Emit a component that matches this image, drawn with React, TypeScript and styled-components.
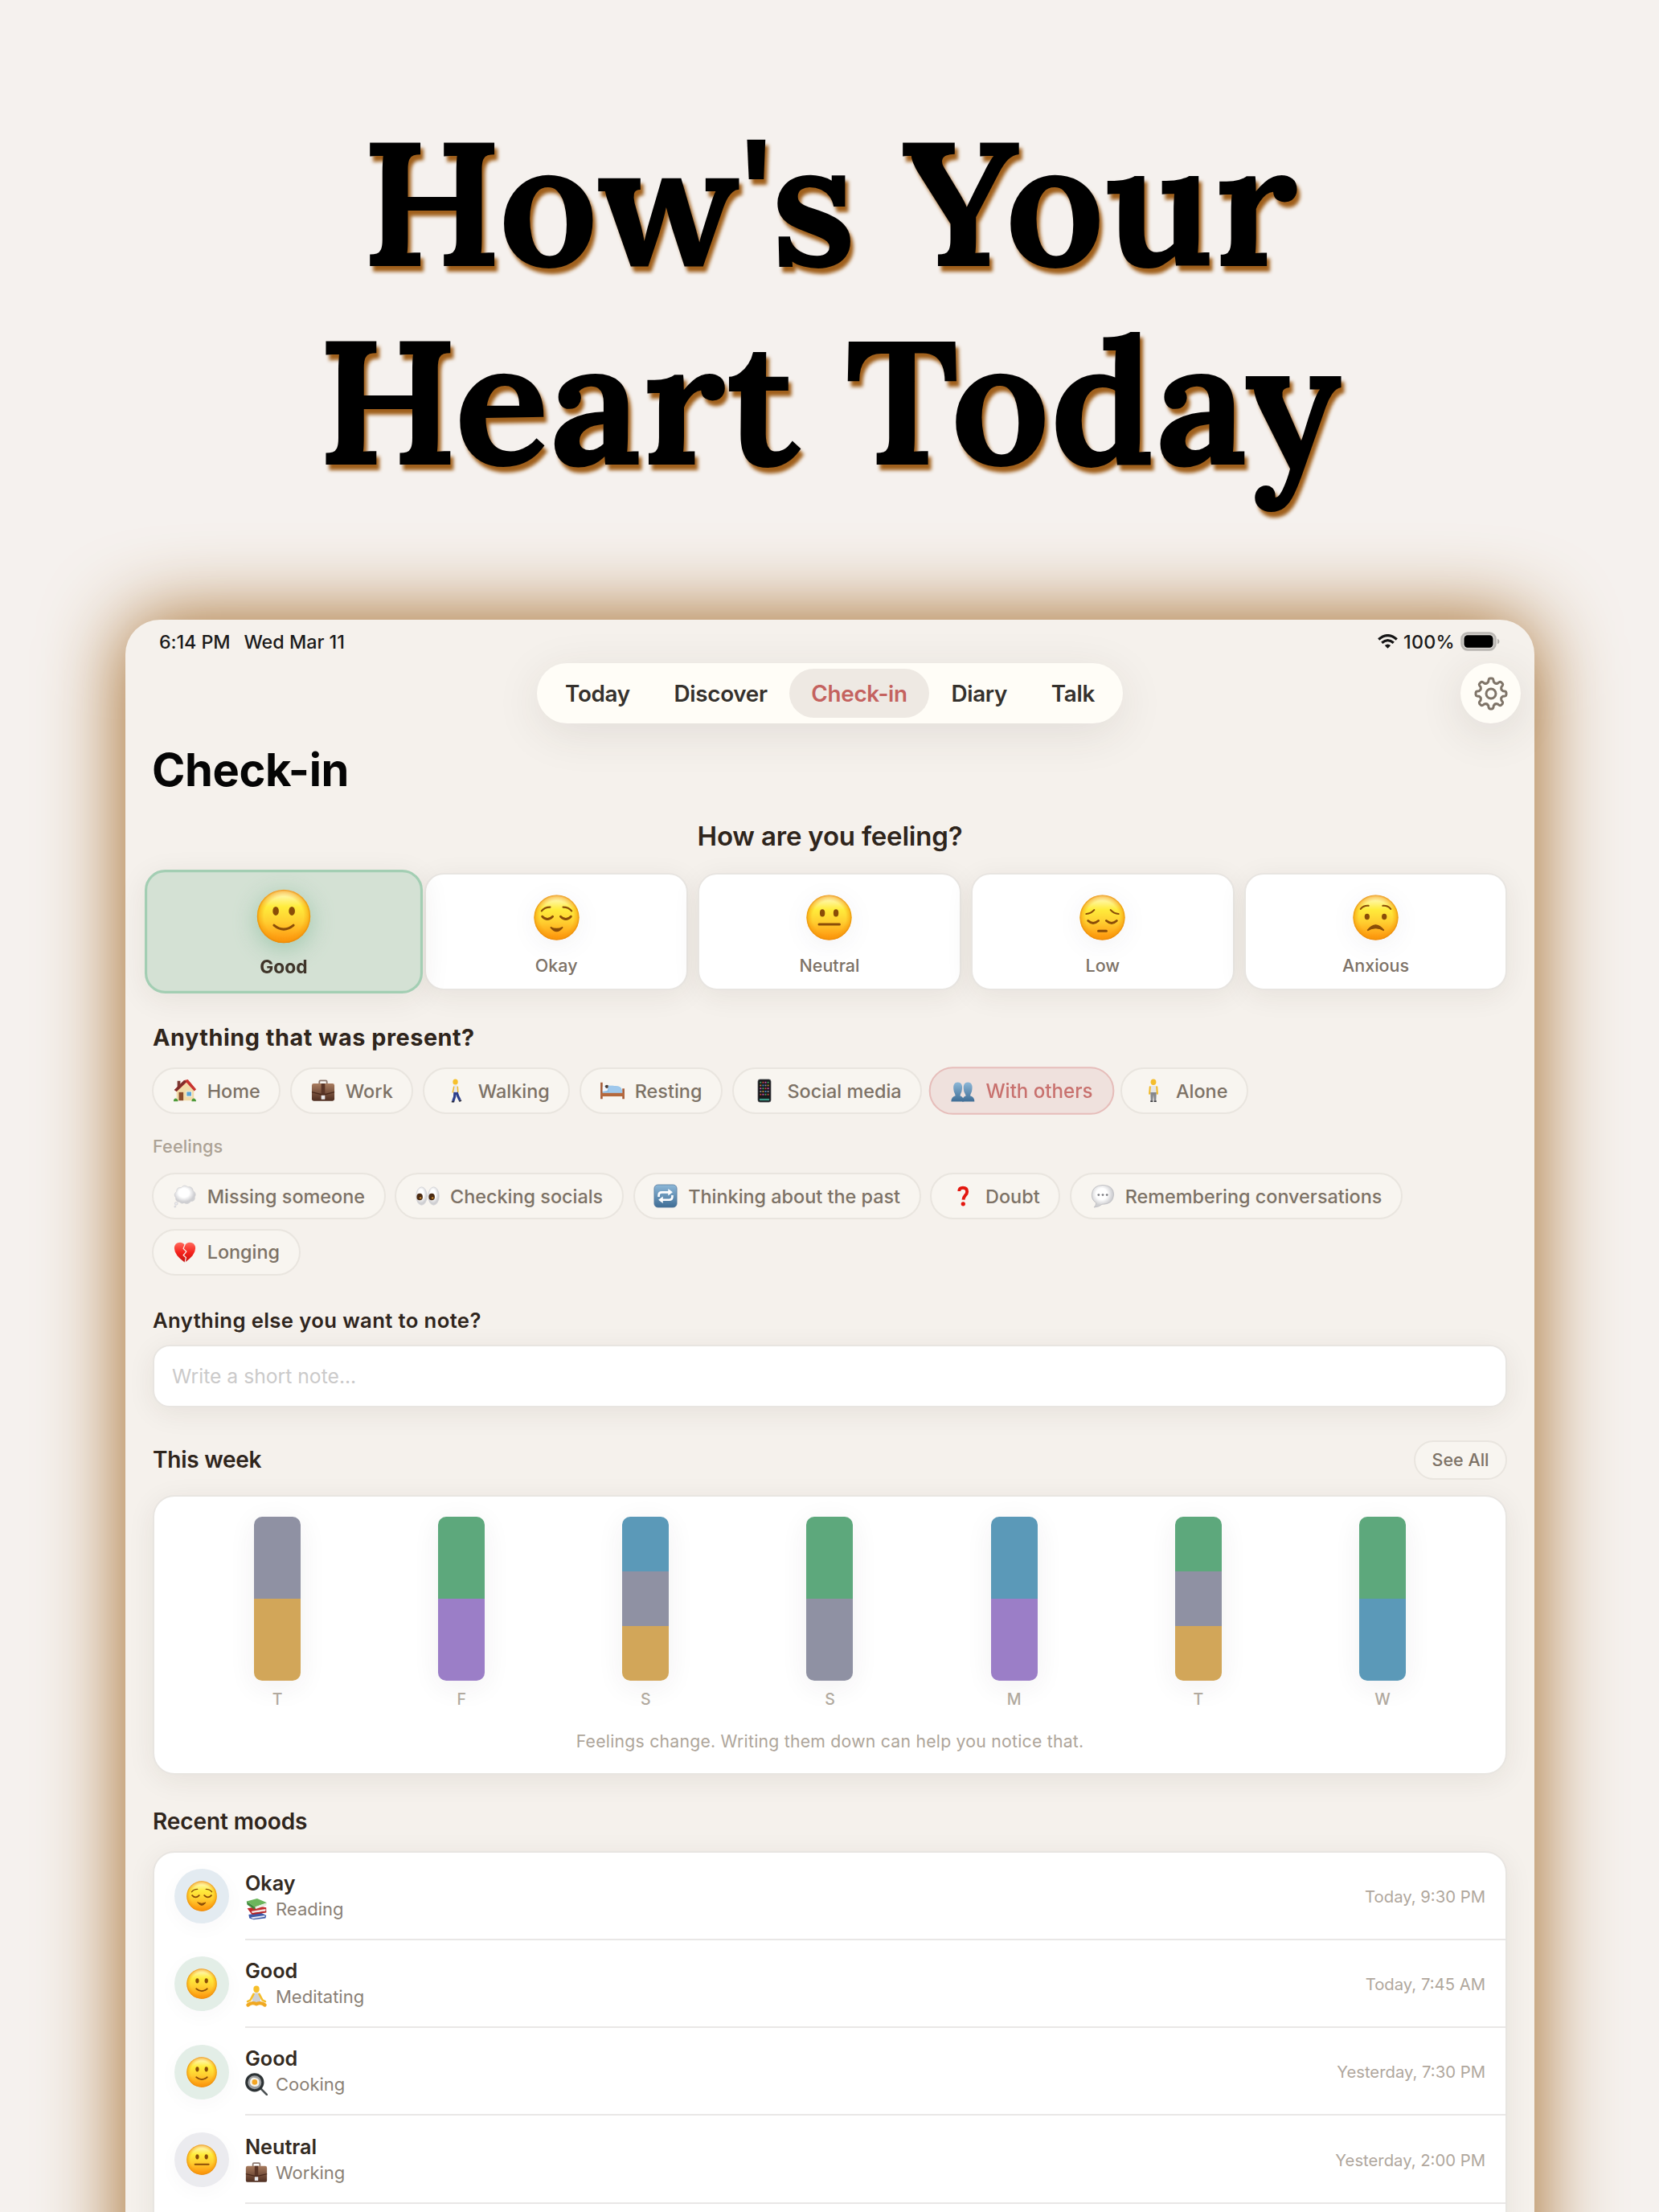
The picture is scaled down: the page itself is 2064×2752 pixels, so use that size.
import React from 'react';
import styled, { createGlobalStyle, css } from 'styled-components';

const GlobalStyle = createGlobalStyle`
  * {
    box-sizing: border-box;
  }

  body {
    margin: 0;
    background: #f5f1ee;
    font-family: 'Inter', 'Liberation Sans', sans-serif;
    -webkit-font-smoothing: antialiased;
  }
`;

const Page = styled.main`
  width: 2064px;
  height: 2752px;
  overflow: hidden;
  display: flex;
  flex-direction: column;
  align-items: center;
  background: #f5f1ee;
`;

const Headline = styled.h1`
  margin: 0;
  padding-top: 128px;
  height: 771px;
  flex: none;
  text-align: center;
  font-family: 'Lora', 'Liberation Serif', serif;
  font-weight: 700;
  font-size: 219px;
  line-height: 247px;
  color: #000;
  text-shadow: 4px 7px 4px #a0601c;
`;

const Tablet = styled.section`
  width: 1753px;
  height: 2100px;
  margin-left: 1px;
  flex: none;
  border-radius: 43px 43px 0 0;
  background: #f5f1ec;
  box-shadow: 0 0 100px #a0641f;
`;

/* status bar */

const StatusBar = styled.div`
  height: 54.3px;
  padding: 0 43px 0 42px;
  display: flex;
  align-items: center;
  font-size: 23.3px;
  font-weight: 550;
  color: #1a1a1a;
`;

const StatusText = styled.span<{ $gap?: number; $spacing?: number }>`
  margin-right: ${props => props.$gap ?? 0}px;
  letter-spacing: ${props => props.$spacing ?? 0}px;
  white-space: nowrap;
`;

const StatusRight = styled.div`
  margin-left: auto;
  display: flex;
  align-items: center;
  gap: 7px;
`;

/* navigation */

const NavRow = styled.div`
  display: grid;
  grid-template-columns: 1fr auto 1fr;
  align-items: center;
  padding: 0 17px;
  height: 75px;
`;

const NavPill = styled.nav`
  grid-column: 2;
  height: 75px;
  padding: 0 8px;
  display: flex;
  align-items: center;
  border-radius: 38px;
  background: #fffdf7;
  box-shadow: 0 12px 56px rgba(60, 50, 40, 0.1);
`;

const NavTab = styled.a<{ $active?: boolean }>`
  height: 61px;
  padding: 0 27.3px;
  display: flex;
  align-items: center;
  border-radius: 31px;
  font-size: 27.8px;
  font-weight: 570;
  letter-spacing: -0.28px;
  color: ${props => (props.$active ? '#c4625f' : '#35312d')};
  background: ${props => (props.$active ? '#eee9e3' : 'transparent')};
`;

const GearButton = styled.button`
  justify-self: end;
  width: 75px;
  height: 75px;
  padding: 0;
  border: 0;
  border-radius: 50%;
  display: grid;
  place-items: center;
  background: #fffdf7;
  box-shadow: 0 12px 56px rgba(60, 50, 40, 0.12);
`;

/* content */

const Content = styled.div`
  padding: 0 34px;
`;

const Title = styled.h2`
  margin: 28px 0 0 -1px;
  font-size: 56px;
  line-height: 60px;
  font-weight: 700;
  letter-spacing: -0.4px;
  color: #050505;
`;

const Question = styled.h3`
  margin: 32px 0 0;
  text-align: center;
  font-size: 33px;
  line-height: 40px;
  font-weight: 620;
  letter-spacing: -0.2px;
  color: #2f251c;
`;

const SectionTitle = styled.h3<{ $top: number; $size?: number; $spacing?: number; $weight?: number }>`
  margin: ${props => props.$top}px 0 0;
  font-size: ${props => props.$size ?? 28}px;
  line-height: 34px;
  font-weight: ${props => props.$weight ?? 600};
  letter-spacing: ${props => props.$spacing ?? -0.1}px;
  color: #2f251c;
`;

const SubLabel = styled.div`
  margin: 25.5px 0 19.5px;
  font-size: 21.7px;
  line-height: 28px;
  font-weight: 500;
  letter-spacing: 0.1px;
  color: #aca295;
`;

const surface = css`
  background: #fff;
  border: 2px solid #e8e5e1;
  box-shadow: 0 7px 34px rgba(60, 45, 30, 0.075);
`;

const MoodGrid = styled.div`
  margin: 26px -0.5px 0 -1.5px;
  display: grid;
  grid-template-columns: repeat(5, 1fr);
  gap: 12px;
`;

const MoodCard = styled.button<{ $selected?: boolean }>`
  ${surface}
  height: 146px;
  padding: 25px 0 0;
  display: flex;
  flex-direction: column;
  align-items: center;
  gap: 17px;
  border-radius: 24px;
  font-family: inherit;
  font-size: 21.5px;
  line-height: 28px;
  font-weight: 500;
  color: #7d7267;

  svg {
    filter: drop-shadow(0 6px 14px rgba(40, 40, 60, 0.06));
  }

  ${props =>
    props.$selected &&
    css`
      transform: scale(1.055);
      padding-top: 20px;
      gap: 13px;
      background: #d4e1d4;
      border: 3px solid #a3ceb3;
      font-weight: 700;
      color: #3f3429;

      svg {
        filter: drop-shadow(0 6px 14px rgba(93, 168, 124, 0.45));
      }
    `}
`;

const ChipRow = styled.div<{ $top?: number }>`
  margin: ${props => props.$top ?? 0}px -1px 0;
  display: flex;
  flex-wrap: wrap;
  gap: 11.7px;
`;

const Chip = styled.button<{ $selected?: boolean }>`
  height: 58px;
  padding: 0 23.7px;
  display: flex;
  align-items: center;
  gap: 13px;
  border: 2px solid #e9e5df;
  border-radius: 29px;
  background: #f8f5f0;
  font-family: inherit;
  font-size: 23.4px;
  font-weight: 500;
  white-space: nowrap;
  color: #7d7266;

  ${props =>
    props.$selected &&
    css`
      transform: scale(1.03);
      border: 2px solid #e6bdba;
      background: #efe1dd;
      color: #c8716e;
    `}
`;

const NoteInput = styled.input`
  ${surface}
  display: block;
  width: 100%;
  height: 78px;
  margin-top: 13.5px;
  padding: 0 22px;
  border-radius: 21px;
  font-family: inherit;
  font-size: 24.7px;
  outline: none;

  &::placeholder {
    color: #cbcaca;
    opacity: 1;
  }
`;

const WeekHeader = styled.div`
  height: 49px;
  margin-top: 40.5px;
  display: flex;
  align-items: center;
  justify-content: space-between;
`;

const SeeAll = styled.button`
  height: 49px;
  width: 116px;
  padding: 0;
  border: 2px solid #e9e5df;
  border-radius: 25px;
  background: #f8f5f0;
  font-family: inherit;
  font-size: 21.5px;
  font-weight: 550;
  color: #7d7266;
`;

const WeekCard = styled.div`
  ${surface}
  height: 348px;
  margin-top: 19px;
  padding: 25.5px 38.5px 0;
  border-radius: 27px;
`;

const Bars = styled.div`
  display: grid;
  grid-template-columns: repeat(7, 1fr);
  justify-items: center;
`;

const Day = styled.div`
  display: flex;
  flex-direction: column;
  align-items: center;
  gap: 8.5px;
  font-size: 19.5px;
  line-height: 28px;
  font-weight: 500;
  color: #b1a99e;
`;

const Bar = styled.div`
  width: 58px;
  height: 204px;
  display: flex;
  flex-direction: column;
  overflow: hidden;
  border-radius: 10px;
`;

const BarShadow = styled.div`
  border-radius: 10px;
  box-shadow: 0 7px 34px rgba(60, 45, 50, 0.07);
`;

const Segment = styled.div<{ $color: string }>`
  flex: 1;
  background: ${props => props.$color};
`;

const Footnote = styled.p`
  margin: 23.5px 0 0;
  text-align: center;
  font-size: 21.2px;
  line-height: 30px;
  letter-spacing: 0.25px;
  color: #aea59a;
`;

const MoodList = styled.div`
  ${surface}
  margin-top: 20px;
  height: 560px;
  border-radius: 27px;
`;

const MoodRow = styled.div`
  height: 109.4px;
  padding-left: 24.5px;
  display: flex;
  align-items: center;
  gap: 20.5px;

  &:first-child {
    height: 109px;
  }
`;

const Avatar = styled.div<{ $tint: string }>`
  width: 68px;
  height: 68px;
  flex: none;
  display: grid;
  place-items: center;
  border-radius: 50%;
  background: ${props => props.$tint};
  box-shadow: 0 6px 24px rgba(60, 45, 50, 0.03);
`;

const MoodBody = styled.div`
  flex: 1;
  align-self: stretch;
  display: flex;
  align-items: center;
  justify-content: space-between;
  padding: 2px 25px 0 0;
  border-bottom: 2px solid #e9e7e6;
`;

const MoodName = styled.div`
  font-size: 25.2px;
  line-height: 31px;
  font-weight: 600;
  color: #332a21;
`;

const MoodTag = styled.div`
  display: flex;
  align-items: center;
  gap: 10px;
  font-size: 22px;
  line-height: 32px;
  color: #8a7f75;
`;

const MoodTime = styled.time`
  font-size: 20.3px;
  color: #b0a79d;
`;

/* icons */

type FaceKind = 'good' | 'okay' | 'neutral' | 'low' | 'anxious';

const featureStroke = {
  fill: 'none',
  stroke: '#8a4d08',
  strokeWidth: 2.8,
  strokeLinecap: 'round' as const,
};

const faceFeatures: Record<FaceKind, React.ReactNode> = {
  good: (
    <>
      <ellipse cx="22.6" cy="25.8" rx="3.6" ry="5.2" fill="#8a4d08" />
      <ellipse cx="41.6" cy="25.8" rx="3.6" ry="5.2" fill="#8a4d08" />
      <path d="M20.5 42.5Q32 52 43.5 42.5" {...featureStroke} />
    </>
  ),
  okay: (
    <>
      <path d="M11 23Q15 17.5 23 17.5M53 23Q49 17.5 41 17.5" {...featureStroke} strokeWidth={2.4} />
      <path d="M12 30.5Q19 38 26.5 30.5M37.5 30.5Q45 38 52 30.5" {...featureStroke} strokeWidth={3.2} />
      <path d="M23.5 45.5Q32 50 40.5 45.5Q32 57 23.5 45.5Z" {...featureStroke} fill="#8a4d08" strokeWidth={1.6} />
    </>
  ),
  neutral: (
    <>
      <ellipse cx="22.6" cy="25.8" rx="3.6" ry="5.2" fill="#8a4d08" />
      <ellipse cx="41.6" cy="25.8" rx="3.6" ry="5.2" fill="#8a4d08" />
      <path d="M18 41.5H46.5" {...featureStroke} strokeWidth={3.4} />
    </>
  ),
  low: (
    <>
      <path d="M9.5 27Q16 26.5 20.5 21.5M54.5 27Q48 26.5 43.5 21.5" {...featureStroke} strokeWidth={2.4} />
      <path d="M12 36.5Q19 43 26.5 36.5M37.5 36.5Q45 43 52 36.5" {...featureStroke} strokeWidth={3.2} />
      <path d="M26.5 50.8H37.5" {...featureStroke} strokeWidth={3.4} />
    </>
  ),
  anxious: (
    <>
      <path d="M11 20Q15 15 22 15.5M53 20Q49 15 42 15.5" {...featureStroke} strokeWidth={2.4} />
      <ellipse cx="20" cy="31" rx="3.5" ry="4.2" fill="#8a4d08" />
      <ellipse cx="44" cy="31" rx="3.5" ry="4.2" fill="#8a4d08" />
      <path d="M20.5 50Q32 35 43.5 50Q32 43.5 20.5 50Z" {...featureStroke} fill="#8a4d08" strokeWidth={1.6} />
    </>
  ),
};

function Face({ kind, size }: { kind: FaceKind; size: number }) {
  return (
    <svg width={size} height={size} viewBox="0 0 64 64">
      <circle cx="32" cy="32" r="31.5" fill="url(#faceFill)" />
      <circle cx="32" cy="32" r="31.5" fill="url(#faceEdge)" />
      {faceFeatures[kind]}
    </svg>
  );
}

function FaceGradients() {
  return (
    <svg width="0" height="0" style={{ position: 'absolute' }} aria-hidden>
      <defs>
        <linearGradient id="faceFill" x1="0" y1="0" x2="0" y2="1">
          <stop offset="0" stopColor="#fffad0" />
          <stop offset="0.12" stopColor="#fff6a0" />
          <stop offset="0.32" stopColor="#ffec3c" />
          <stop offset="0.6" stopColor="#ffce30" />
          <stop offset="1" stopColor="#ff8f0a" />
        </linearGradient>
        <radialGradient id="faceEdge">
          <stop offset="0.74" stopColor="#f59a0a" stopOpacity="0" />
          <stop offset="0.92" stopColor="#f59a0a" stopOpacity="0.5" />
          <stop offset="1" stopColor="#e58505" stopOpacity="0.9" />
        </radialGradient>
        <linearGradient id="leather" x1="0" y1="0" x2="0" y2="1">
          <stop offset="0" stopColor="#a87b5e" />
          <stop offset="1" stopColor="#4e2d20" />
        </linearGradient>
        <linearGradient id="steel" x1="0" y1="0" x2="0" y2="1">
          <stop offset="0" stopColor="#8db8d8" />
          <stop offset="1" stopColor="#3f6d95" />
        </linearGradient>
        <radialGradient id="cloud" cx="0.45" cy="0.4">
          <stop offset="0.5" stopColor="#ffffff" />
          <stop offset="1" stopColor="#cfcfd2" />
        </radialGradient>
        <linearGradient id="heart" x1="0" y1="0" x2="0" y2="1">
          <stop offset="0" stopColor="#ff6a5c" />
          <stop offset="0.5" stopColor="#f5231d" />
          <stop offset="1" stopColor="#c3120f" />
        </linearGradient>
      </defs>
    </svg>
  );
}

const glyphs: Record<string, React.ReactNode> = {
  house: (
    <>
      <path d="M5 14L17 4L28 15V29H5Z" fill="#f1dba9" />
      <path d="M6 3H10V9L6 13Z" fill="#7c3a33" />
      <path d="M2 15L15 2L20 1L31 14L28.500 16.500L18 5L5 17Z" fill="#c8342f" />
      <path d="M2 15L15 2L18 4L5 17Z" fill="#7e2d2b" />
      <rect x="8" y="18" width="6" height="11" fill="#8a4b2b" />
      <rect x="18" y="17" width="7" height="6.500" fill="#58a5d9" stroke="#fff5dd" strokeWidth="1" />
      <path d="M1 30Q1 26 4 26Q7 27 7 30ZM25 30Q25 26 28 26Q31 27 31 30Z" fill="#4d9a3a" />
    </>
  ),
  briefcase: (
    <>
      <path d="M11 7V4Q11 2.500 12.500 2.500H19.500Q21 2.500 21 4V7" fill="none" stroke="#8e7a70" strokeWidth="2" />
      <rect x="1" y="6.500" width="30" height="23" rx="2.500" fill="url(#leather)" />
      <path d="M13.500 6.500H18.500V20L16 23L13.500 20Z" fill="#5a3526" />
      <path d="M1 17L13 20H19L31 17V18.500L19 21.500H13L1 18.500Z" fill="#4a291c" />
      <rect x="13.500" y="22" width="5" height="5.500" rx="0.500" fill="#e9e9ec" />
    </>
  ),
  walking: (
    <>
      <ellipse cx="15.500" cy="4.300" rx="3.400" ry="3.800" fill="#f6c02c" />
      <path d="M13 9Q16.500 7.500 18.500 10L19 19H13L12.500 12Z" fill="#e6e6ec" />
      <path d="M13.500 11L12 18M18.500 11L19 18" fill="none" stroke="#f1b928" strokeWidth="1.600" strokeLinecap="round" />
      <path d="M14.800 18L14.500 24L12.500 30M17.200 18L19 23.500L21.500 28.500" fill="none" stroke="#2d3f8c" strokeWidth="3.400" strokeLinejoin="round" />
      <path d="M10.500 30.500H14M20.500 30L23.500 28.800" stroke="#25283b" strokeWidth="1.800" />
    </>
  ),
  bed: (
    <>
      <path d="M1.500 5V27M30.500 13V27" stroke="#a55c38" strokeWidth="2.800" />
      <path d="M5 10Q7 8 10 9L24 10Q29 11 29 19H3V14Z" fill="#8fc0e8" />
      <path d="M3 10.500H9Q11 13 9 16L3 17Z" fill="#f3f6fb" />
      <circle cx="8.500" cy="10.500" r="2.200" fill="#4c3a33" />
      <path d="M10 10Q16 8 25 11Q28 13 29 19H12Z" fill="#9fc8ec" />
      <rect x="1" y="19" width="30" height="4.500" fill="#b5683c" />
    </>
  ),
  phone: (
    <>
      <rect x="7.500" y="1" width="17" height="30" rx="2.600" fill="#17181b" stroke="#4a4c52" strokeWidth="0.800" />
      {[4, 8, 12, 16, 20].map((y, row) =>
        [10, 13.300, 16.600, 19.900].map((x, col) => (
          <rect
            key={`${x}-${y}`}
            x={x}
            y={y}
            width="2"
            height="2"
            fill={['#4aa564', '#3f85c9', '#c9483f', '#8a8d95', '#c94fb0', '#c28c38'][(row * 5 + col * 2) % 6]}
          />
        )),
      )}
      <rect x="9.500" y="26.500" width="13" height="2.500" fill="#3b9b88" />
    </>
  ),
  people: (
    <>
      <path d="M1 30Q1 24 6.500 22.500Q6 20 4.500 17Q2 5 9.500 5Q17 5 14.500 17Q13 20 12.500 22.500Q17 24 17.500 30Z" fill="url(#steel)" />
      <path d="M15 30Q15.500 24 20 22.500Q19 20 17.500 17Q15 5 22.500 5Q30 5 27.500 17Q26 20 25.500 22.500Q31 24 31 30Z" fill="url(#steel)" />
    </>
  ),
  standing: (
    <>
      <ellipse cx="16" cy="4.500" rx="3.600" ry="4" fill="#f4bd2c" />
      <path d="M12 9.500H20L21 19H11Z" fill="#e4e5e8" />
      <path d="M11.500 11L10.800 20M20.500 11L21.200 20" stroke="#f1b928" strokeWidth="2.200" strokeLinecap="round" />
      <path d="M12 18H20L19.500 29H16.800L16 21L15.200 29H12.500Z" fill="#85878c" />
      <path d="M12 30H15.300M16.700 30H20" stroke="#3c3c40" strokeWidth="1.800" />
    </>
  ),
  thought: (
    <>
      <path
        d="M9 24Q3 23 4 18Q0 14 5 10Q5 4 11 5Q15 0 20 4Q26 3 27 9Q32 13 29 17Q30 23 24 23Q20 28 15 25Q12 27 9 24Z"
        fill="url(#cloud)"
        stroke="#cccccf"
        strokeWidth="0.700"
      />
      <circle cx="4.500" cy="26" r="2" fill="#e9e9ec" stroke="#c5c5c9" strokeWidth="0.600" />
      <circle cx="3" cy="30" r="1.100" fill="#e0e0e4" stroke="#c5c5c9" strokeWidth="0.500" />
    </>
  ),
  eyes: (
    <>
      <ellipse cx="8" cy="16" rx="7.200" ry="12" fill="url(#cloud)" stroke="#d2d2d5" strokeWidth="0.800" />
      <ellipse cx="24" cy="16" rx="7.200" ry="12" fill="url(#cloud)" stroke="#d2d2d5" strokeWidth="0.800" />
      <ellipse cx="5.500" cy="17" rx="4" ry="4.600" fill="#4a2a12" />
      <ellipse cx="21.500" cy="17" rx="4" ry="4.600" fill="#4a2a12" />
      <circle cx="6.500" cy="18.500" r="1.300" fill="#c98a2e" />
      <circle cx="22.500" cy="18.500" r="1.300" fill="#c98a2e" />
    </>
  ),
  repeat: (
    <>
      <rect x="1" y="1" width="30" height="30" rx="5" fill="url(#steel)" stroke="#54779a" strokeWidth="0.800" />
      <path d="M7 17V15Q7 11 11 11H21M25 15V17Q25 21 21 21H11" fill="none" stroke="#fff" strokeWidth="2.800" />
      <path d="M19.500 6.500L25.500 11L19.500 15.500ZM12.500 16.500L6.500 21L12.500 25.500Z" fill="#fff" />
    </>
  ),
  question: (
    <>
      <path d="M11 9.500Q11 5 16 5Q21.500 5 21.500 10Q21.500 13 18.800 15.500Q16.800 17.500 16.500 21" fill="none" stroke="#e3170f" strokeWidth="4.200" />
      <circle cx="16.300" cy="26.500" r="2.800" fill="#e3170f" />
    </>
  ),
  speech: (
    <>
      <path
        d="M16 1.500Q30.500 2 30.500 14Q30 27 15 27Q11 30.500 4.500 31Q7.500 28 7 25Q1 21 1.500 14Q2 2 16 1.500Z"
        fill="url(#cloud)"
        stroke="#bcbcc0"
        strokeWidth="0.900"
      />
      {[10.500, 16, 21.500].map(x => (
        <circle key={x} cx={x} cy="14.500" r="1.500" fill="#7b7b80" />
      ))}
    </>
  ),
  broken: (
    <>
      <path d="M16 29.500Q2 20 2 10.500Q2.500 3 9.500 3Q14 3 16 7Q18 3 22.500 3Q29.500 3 30 10.500Q30 20 16 29.500Z" fill="url(#heart)" />
      <path d="M16 6L14 11L18 15L14 20L17.500 23L16 30" fill="none" stroke="#f8f5f0" strokeWidth="1.300" />
    </>
  ),
  books: (
    <>
      <path d="M5 24L22 21L30 25L29 29L12 31L6 29Z" fill="#3f5aa8" />
      <path d="M8 28L28 25V27L11 30Z" fill="#e7ebf5" />
      <path d="M3 15L9 23L30 20V14L20 12Z" fill="#c32a2c" />
      <path d="M9 19L29 16V19L10 22Z" fill="#f1e4e2" />
      <path d="M9 22L30 19V21L10 24Z" fill="#b52225" />
      <path d="M2 5L17 1L31 7L14 13Z" fill="#6cb55c" />
      <path d="M2 5L14 13V17L3 10Z" fill="#3e8a3b" />
      <path d="M14 13L31 7L30 11L15 16Z" fill="#e8eee4" />
    </>
  ),
  lotus: (
    <>
      <ellipse cx="16" cy="5.500" rx="4.200" ry="4.800" fill="#f6bf2b" />
      <path d="M11 12Q16 9 21 12L22 24H10Z" fill="#cfd1d6" />
      <path d="M12 12.500L7.500 21L3.500 23M20 12.500L24.500 21L28.500 23" fill="none" stroke="#f5bd2a" strokeWidth="3" strokeLinecap="round" />
      <path d="M4 28Q9 23.500 16 26.500Q23 23.500 28 28" fill="none" stroke="#f0a821" strokeWidth="5" strokeLinecap="round" />
    </>
  ),
  pan: (
    <>
      <path d="M21 21L31 31" stroke="#4b5052" strokeWidth="3" strokeLinecap="round" />
      <circle cx="13.500" cy="13.500" r="11.500" fill="#9c9ea0" stroke="#2c3234" strokeWidth="3.600" />
      <path d="M7 11Q9 5 15 7Q21 8 20 14Q20 20 13 19.500Q6 18 7 11Z" fill="#f6f3ea" />
      <circle cx="13.500" cy="13" r="3.800" fill="#f5a623" />
    </>
  ),
};

function Glyph({ name, size = 30 }: { name: string; size?: number }) {
  return (
    <svg width={size} height={size} viewBox="0 0 32 32">
      {glyphs[name]}
    </svg>
  );
}

// eight rounded teeth, walked around the circle in 45 degree steps
function gearPath() {
  const point = (deg: number, r: number) => {
    const a = ((deg - 90) * Math.PI) / 180;
    return `${(22 + r * Math.cos(a)).toFixed(2)} ${(22 + r * Math.sin(a)).toFixed(2)}`;
  };
  let d = '';
  for (let i = 0; i < 8; i++) {
    const c = i * 45;
    d += `${i === 0 ? 'M' : 'L'}${point(c - 12, 15.5)}L${point(c - 9.5, 17.6)}`;
    d += `Q${point(c - 8, 19)} ${point(c - 4, 19)}L${point(c + 4, 19)}Q${point(c + 8, 19)} ${point(c + 9.5, 17.6)}`;
    d += `L${point(c + 12, 15.5)}Q${point(c + 22.5, 12.6)} ${point(c + 33, 15.5)}`;
  }
  return `${d}Z`;
}

function GearIcon() {
  return (
    <svg width="44" height="44" viewBox="0 0 44 44" fill="none" stroke="#7f7468" strokeWidth="3" strokeLinejoin="round">
      <path d={gearPath()} />
      <circle cx="22" cy="22" r="6" />
    </svg>
  );
}

function WifiIcon() {
  return (
    <svg width="25" height="18" viewBox="0 0 25 18" fill="none" stroke="#151515" strokeWidth="3.200">
      <path d="M1.200 6.500Q12.500 -3.300 23.800 6.500" />
      <path d="M5.200 10.800Q12.500 4.600 19.800 10.800" />
      <path d="M12.500 17.700L8.800 14Q12.500 11 16.200 14Z" fill="#151515" stroke="none" />
    </svg>
  );
}

function BatteryIcon() {
  return (
    <svg width="49" height="24" viewBox="0 0 49 24">
      <rect x="1.500" y="1.500" width="42" height="21" rx="7.500" fill="#d9d6d2" stroke="#bab7b3" strokeWidth="2.600" />
      <rect x="4.500" y="4.300" width="36" height="15.400" rx="4.500" fill="#000" />
      <path d="M46 8.500Q48.500 10 48.500 12Q48.500 14 46 15.500Z" fill="#b4b1ad" />
    </svg>
  );
}

/* data */

const tabs = ['Today', 'Discover', 'Check-in', 'Diary', 'Talk'];

const moods: { kind: FaceKind; label: string }[] = [
  { kind: 'good', label: 'Good' },
  { kind: 'okay', label: 'Okay' },
  { kind: 'neutral', label: 'Neutral' },
  { kind: 'low', label: 'Low' },
  { kind: 'anxious', label: 'Anxious' },
];

const contexts = [
  { icon: 'house', label: 'Home' },
  { icon: 'briefcase', label: 'Work' },
  { icon: 'walking', label: 'Walking' },
  { icon: 'bed', label: 'Resting' },
  { icon: 'phone', label: 'Social media' },
  { icon: 'people', label: 'With others' },
  { icon: 'standing', label: 'Alone' },
];

const feelings = [
  { icon: 'thought', label: 'Missing someone' },
  { icon: 'eyes', label: 'Checking socials' },
  { icon: 'repeat', label: 'Thinking about the past' },
  { icon: 'question', label: 'Doubt' },
  { icon: 'speech', label: 'Remembering conversations' },
  { icon: 'broken', label: 'Longing' },
];

const GREEN = '#5da87c';
const BLUE = '#5b99b8';
const GRAY = '#8f91a3';
const GOLD = '#d2a659';
const PURPLE = '#9b7ec7';

const week = [
  { day: 'T', parts: [GRAY, GOLD] },
  { day: 'F', parts: [GREEN, PURPLE] },
  { day: 'S', parts: [BLUE, GRAY, GOLD] },
  { day: 'S', parts: [GREEN, GRAY] },
  { day: 'M', parts: [BLUE, PURPLE] },
  { day: 'T', parts: [GREEN, GRAY, GOLD] },
  { day: 'W', parts: [GREEN, BLUE] },
];

const recent: { kind: FaceKind; name: string; icon: string; tag: string; time: string; tint: string }[] = [
  { kind: 'okay', name: 'Okay', icon: 'books', tag: 'Reading', time: 'Today, 9:30 PM', tint: '#e3ebf1' },
  { kind: 'good', name: 'Good', icon: 'lotus', tag: 'Meditating', time: 'Today, 7:45 AM', tint: '#e3eee7' },
  { kind: 'good', name: 'Good', icon: 'pan', tag: 'Cooking', time: 'Yesterday, 7:30 PM', tint: '#e3eee7' },
  { kind: 'neutral', name: 'Neutral', icon: 'briefcase', tag: 'Working', time: 'Yesterday, 2:00 PM', tint: '#ebebef' },
];

export default function App() {
  return (
    <Page>
      <GlobalStyle />
      <FaceGradients />
      <Headline>
        How's Your
        <br />
        Heart Today
      </Headline>

      <Tablet>
        <StatusBar>
          <StatusText $gap={17} $spacing={-0.1}>6:14 PM</StatusText>
          <StatusText>Wed Mar 11</StatusText>
          <StatusRight>
            <WifiIcon />
            <StatusText $spacing={0.3}>100%</StatusText>
            <BatteryIcon />
          </StatusRight>
        </StatusBar>

        <NavRow>
          <NavPill>
            {tabs.map(tab => (
              <NavTab key={tab} $active={tab === 'Check-in'}>
                {tab}
              </NavTab>
            ))}
          </NavPill>
          <GearButton aria-label="Settings">
            <GearIcon />
          </GearButton>
        </NavRow>

        <Content>
          <Title>Check-in</Title>
          <Question>How are you feeling?</Question>

          <MoodGrid>
            {moods.map(mood => (
              <MoodCard key={mood.kind} $selected={mood.kind === 'good'}>
                <Face kind={mood.kind} size={mood.kind === 'good' ? 64 : 57} />
                {mood.label}
              </MoodCard>
            ))}
          </MoodGrid>

          <SectionTitle $top={42} $size={28.8} $weight={650} $spacing={0.53}>
            Anything that was present?
          </SectionTitle>
          <ChipRow $top={20}>
            {contexts.map(chip => (
              <Chip key={chip.label} $selected={chip.label === 'With others'}>
                <Glyph name={chip.icon} />
                {chip.label}
              </Chip>
            ))}
          </ChipRow>
          <SubLabel>Feelings</SubLabel>
          <ChipRow>
            {feelings.map(chip => (
              <Chip key={chip.label}>
                <Glyph name={chip.icon} />
                {chip.label}
              </Chip>
            ))}
          </ChipRow>

          <SectionTitle $top={39} $size={25.7} $spacing={0.37}>
            Anything else you want to note?
          </SectionTitle>
          <NoteInput placeholder="Write a short note..." />

          <WeekHeader>
            <SectionTitle $top={0} $spacing={-0.25}>
              This week
            </SectionTitle>
            <SeeAll>See All</SeeAll>
          </WeekHeader>
          <WeekCard>
            <Bars>
              {week.map((entry, i) => (
                <Day key={i}>
                  <BarShadow>
                    <Bar>
                      {entry.parts.map(color => (
                        <Segment key={color} $color={color} />
                      ))}
                    </Bar>
                  </BarShadow>
                  {entry.day}
                </Day>
              ))}
            </Bars>
            <Footnote>Feelings change. Writing them down can help you notice that.</Footnote>
          </WeekCard>

          <SectionTitle $top={40.7}>Recent moods</SectionTitle>
          <MoodList>
            {recent.map(entry => (
              <MoodRow key={entry.time}>
                <Avatar $tint={entry.tint}>
                  <Face kind={entry.kind} size={38} />
                </Avatar>
                <MoodBody>
                  <div>
                    <MoodName>{entry.name}</MoodName>
                    <MoodTag>
                      <Glyph name={entry.icon} size={28} />
                      {entry.tag}
                    </MoodTag>
                  </div>
                  <MoodTime>{entry.time}</MoodTime>
                </MoodBody>
              </MoodRow>
            ))}
          </MoodList>
        </Content>
      </Tablet>
    </Page>
  );
}
